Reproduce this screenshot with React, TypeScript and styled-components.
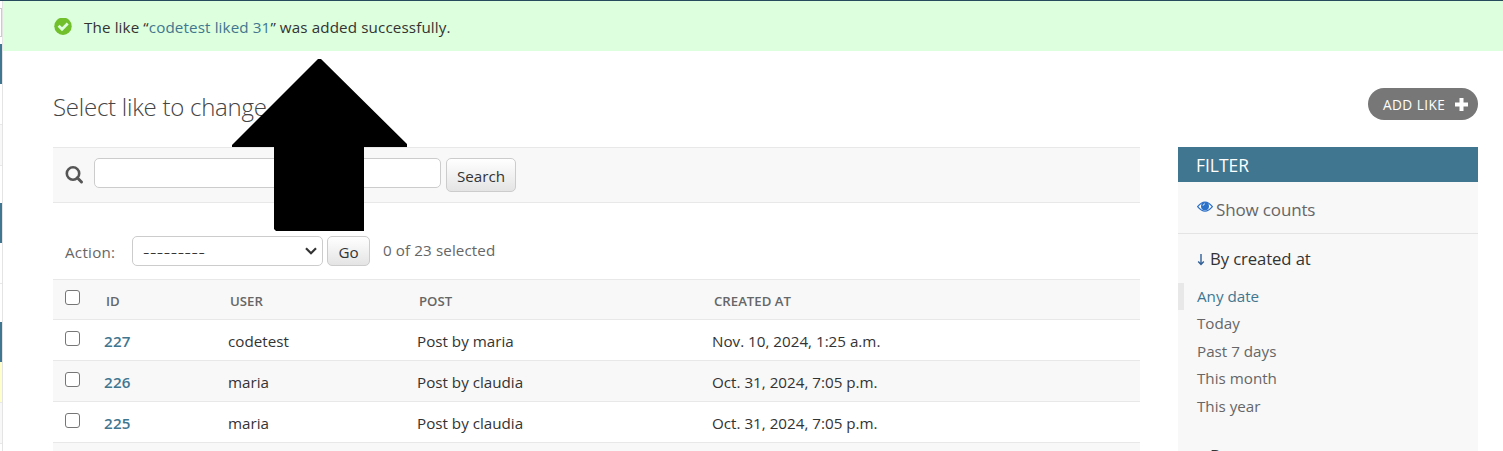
import React from "react";
import styled, { createGlobalStyle } from "styled-components";

const GlobalStyle = createGlobalStyle`
  * { box-sizing: border-box; }
  html, body { margin: 0; padding: 0; overflow: hidden; background: #fff; }
  body { font-family: "Open Sans", "Noto Sans", sans-serif; font-size: 15.2px; color: #333; }
  h1, h2, h3, ul, p { margin: 0; padding: 0; font-weight: 400; }
  a { color: #417690; text-decoration: none; }
`;

const Page = styled.div`
  position: relative;
  display: flex;
  height: 451px;
  overflow: hidden;
  border-top: 1px solid #264b5d;
`;
const NavEdge = styled.nav`
  width: 3px;
  flex: none;
  border-right: 1px solid #e4e4e4;
`;
const NavBlock = styled.div<{ $h: number; $bg?: string; $line?: boolean }>`
  height: ${(p) => p.$h}px;
  background: ${(p) => p.$bg || "#fff"};
  border-top: ${(p) => (p.$line ? "1px solid #e8e8e8" : "0")};
`;
const NavInput = styled.div`
  height: 29px;
  border: 1px solid #ccc;
  border-left: 0;
`;
const Main = styled.main`
  flex: 1;
  min-width: 0;
`;
const Message = styled.div`
  display: flex;
  align-items: center;
  height: 50px;
  padding: 2px 0 0 51px;
  background: #dfd;
`;
const MessageText = styled.p`
  margin-left: 12px;
  line-height: 20px;
  letter-spacing: 0.12px;
  white-space: nowrap;
`;
const Content = styled.div`
  padding: 36px 25px 0 50px;
`;
const TitleRow = styled.div`
  display: flex;
  justify-content: space-between;
  height: 60px;
`;
const Title = styled.h1`
  margin-top: 4px;
  font-size: 24px;
  font-weight: 300;
  line-height: 32px;
  letter-spacing: -0.25px;
  color: #444;
`;
const AddButton = styled.a`
  display: flex;
  align-items: center;
  justify-content: space-between;
  width: 110px;
  height: 32px;
  margin-top: 1px;
  padding: 0 10px 0 15px;
  border-radius: 16px;
  background: #777;
  color: #fff;
  font-size: 13.6px;
  letter-spacing: 0.45px;
  white-space: nowrap;
`;
const AddLabel = styled.span`
  padding-top: 1px;
`;
const Columns = styled.div`
  display: flex;
  justify-content: space-between;
  align-items: flex-start;
`;
const List = styled.section`
  width: 1087px;
`;
const SearchBar = styled.div`
  display: flex;
  height: 56px;
  padding: 10px 12px;
  background: #f8f8f8;
  border-top: 1px solid #e8e8e8;
  border-bottom: 1px solid #e8e8e8;
`;
const SearchIcon = styled.svg`
  margin: 8px 10px 0 0;
`;
const SearchInput = styled.input`
  width: 347px;
  height: 30px;
  margin-right: 5px;
  border: 1px solid #ccc;
  border-radius: 5px;
  background: #fff;
`;
const Button = styled.button<{ $w: number; $h: number }>`
  width: ${(p) => p.$w}px;
  height: ${(p) => p.$h}px;
  padding: 2px 0 0;
  border: 1px solid #ccc;
  border-radius: 5px;
  background: linear-gradient(#fff, #e4e4e4);
  color: #333;
  font: 15.2px "Open Sans", sans-serif;
`;
const Actions = styled.div`
  display: flex;
  height: 76px;
  padding: 33px 12px 0;
  color: #666;
`;
const ActionLabel = styled.label`
  width: 67px;
  padding-top: 6px;
  line-height: 20px;
  letter-spacing: 0.25px;
`;
const Select = styled.div`
  display: flex;
  align-items: center;
  justify-content: space-between;
  width: 191px;
  height: 30px;
  margin-right: 4px;
  padding: 0 5px 0 10px;
  border: 1px solid #ccc;
  border-radius: 5px;
  color: #333;
`;
const Dashes = styled.span`
  padding-top: 2px;
  font-size: 20px;
  font-weight: 300;
  line-height: 26px;
  letter-spacing: 0.5px;
`;
const Counter = styled.span`
  margin-left: 13px;
  padding-top: 4px;
  line-height: 20px;
  letter-spacing: 0.1px;
`;
const Row = styled.div<{ $head?: boolean; $alt?: boolean }>`
  display: grid;
  grid-template-columns: 51px 124px 189px 295px 1fr;
  height: 41px;
  line-height: 20px;
  padding-top: ${(p) => (p.$head ? 10 : 11)}px;
  background: ${(p) => (p.$head || p.$alt ? "#f8f8f8" : "#fff")};
  border-top: ${(p) => (p.$head ? "1px solid #e8e8e8" : "0")};
  border-bottom: 1px solid #e8e8e8;
`;
const HeadCell = styled.span`
  padding: 1px 0 0 2px;
  color: #666;
  font-size: 13.2px;
  font-weight: 600;
`;
const Cell = styled.span``;
const IdLink = styled.a`
  font-weight: 600;
  letter-spacing: 0.2px;
`;
const Check = styled.input`
  appearance: none;
  width: 15px;
  height: 15px;
  margin: 0 0 0 12px;
  border: 1px solid #767676;
  border-radius: 3px;
  background: #fff;
`;
const Filter = styled.aside`
  width: 300px;
  height: 320px;
  background: #f8f8f8;
`;
const FilterTitle = styled.h2`
  height: 35px;
  padding: 1px 0 0 18px;
  background: #417690;
  color: #fff;
  font-size: 17.4px;
  line-height: 34px;
`;
const Counts = styled.div`
  display: flex;
  height: 52px;
  padding: 16px 0 0 19px;
  border-bottom: 1px solid #e4e4e4;
  color: #666;
  font-size: 17px;
  line-height: 24px;
  letter-spacing: -0.15px;
`;
const CountsLabel = styled.span`
  margin-left: 3px;
`;
const FilterHeading = styled.h3`
  display: flex;
  padding-left: 19px;
  font-size: 16.7px;
  line-height: 24px;
  letter-spacing: -0.1px;
  color: #333;
`;
const DownArrow = styled.svg`
  margin: 6px 5px 0 0;
`;
const Group = styled.div`
  padding-top: 13px;
`;
const Options = styled.ul`
  list-style: none;
  padding: 11.5px 0 24px;
`;
const Option = styled.li<{ $on?: boolean }>`
  height: 27.5px;
  line-height: 27px;
  padding-left: ${(p) => (p.$on ? 13 : 19)}px;
  border-left: ${(p) => (p.$on ? "6px solid #e8e8e8" : "0")};
  color: ${(p) => (p.$on ? "#417690" : "#666")};
`;
const Pointer = styled.svg`
  position: absolute;
  left: 232px;
  top: 58px;
`;

const rows = [
  ["227", "codetest", "Post by maria", "Nov. 10, 2024, 1:25 a.m."],
  ["226", "maria", "Post by claudia", "Oct. 31, 2024, 7:05 p.m."],
  ["225", "maria", "Post by claudia", "Oct. 31, 2024, 7:05 p.m."],
];
const dates = ["Any date", "Today", "Past 7 days", "This month", "This year"];

const Down = () => (
  <DownArrow width="8" height="14" viewBox="0 0 8 14">
    <path d="M4 1V11.500M1.200 8.500 4 11.500l2.800-3" fill="none" stroke="#315f96" strokeWidth="1.4" />
  </DownArrow>
);

export default function App() {
  return (
    <>
      <GlobalStyle />
      <Page>
        <NavEdge>
          <NavBlock $h={7} />
          <NavInput />
          <NavBlock $h={7} />
          <NavBlock $h={40} $bg="#417690" />
          <NavBlock $h={40} />
          <NavBlock $h={41} $bg="#f8f8f8" $line />
          <NavBlock $h={38} $line />
          <NavBlock $h={40} $bg="#417690" />
          <NavBlock $h={40} />
          <NavBlock $h={39} $line />
          <NavBlock $h={40} $bg="#417690" />
          <NavBlock $h={40} $bg="#ffffcc" />
          <NavBlock $h={41} $bg="#f8f8f8" $line />
          <NavBlock $h={10} $line />
        </NavEdge>
        <Main>
          <Message>
            <svg width="18" height="18" viewBox="0 0 18 18">
              <circle cx="9" cy="8.200" r="8.700" fill="#70bf2b" />
              <path d="m4.600 7.800 3.400 3.400 5.700-5.700" fill="none" stroke="#dfd" strokeWidth="2.800" />
            </svg>
            <MessageText>
              The like “<a>codetest liked 31</a>” was added successfully.
            </MessageText>
          </Message>
          <Content>
            <TitleRow>
              <Title>Select like to change</Title>
              <AddButton>
                <AddLabel>ADD LIKE</AddLabel>
                <svg width="13" height="13" viewBox="0 0 13 13">
                  <path d="M6.500 0v13M0 6.500h13" stroke="#fff" strokeWidth="4" />
                </svg>
              </AddButton>
            </TitleRow>
            <Columns>
              <List>
                <SearchBar>
                  <SearchIcon width="19" height="19" viewBox="0 0 19 19">
                    <circle cx="8" cy="7.500" r="6.200" fill="none" stroke="#555" strokeWidth="2.600" />
                    <path d="m12.300 11.800 4.200 4.200" stroke="#555" strokeWidth="3" strokeLinecap="round" />
                  </SearchIcon>
                  <SearchInput />
                  <Button $w={70} $h={34}>Search</Button>
                </SearchBar>
                <Actions>
                  <ActionLabel>Action:</ActionLabel>
                  <Select>
                    <Dashes>---------</Dashes>
                    <svg width="12" height="8" viewBox="0 0 12 8">
                      <path d="m1 1.200 5 5 5-5" fill="none" stroke="#333" strokeWidth="2.200" />
                    </svg>
                  </Select>
                  <Button $w={43} $h={30}>Go</Button>
                  <Counter>0 of 23 selected</Counter>
                </Actions>
                <Row $head>
                  <Check type="checkbox" />
                  <HeadCell>ID</HeadCell>
                  <HeadCell>USER</HeadCell>
                  <HeadCell>POST</HeadCell>
                  <HeadCell>CREATED AT</HeadCell>
                </Row>
                {rows.map(([id, user, post, created], i) => (
                  <Row key={id} $alt={i % 2 === 1}>
                    <Check type="checkbox" />
                    <IdLink>{id}</IdLink>
                    <Cell>{user}</Cell>
                    <Cell>{post}</Cell>
                    <Cell>{created}</Cell>
                  </Row>
                ))}
                <Row $alt />
              </List>
              <Filter>
                <FilterTitle>FILTER</FilterTitle>
                <Counts>
                  <svg width="16" height="18" viewBox="0 0 16 18">
                    <path d="M.6 8.600Q8-.5 15.400 8.600 8 17.500 .6 8.600Z" fill="#fff" stroke="#2b70c9" strokeWidth="1.200" />
                    <circle cx="8" cy="8.200" r="4" fill="#2b70c9" />
                    <path d="M6 7.800q.2-1.800 2-2" fill="none" stroke="#fff" strokeWidth=".8" />
                  </svg>
                  <CountsLabel>Show counts</CountsLabel>
                </Counts>
                <Group>
                  <FilterHeading><Down />By created at</FilterHeading>
                  <Options>
                    {dates.map((d, i) => (
                      <Option key={d} $on={i === 0}>{d}</Option>
                    ))}
                  </Options>
                  <FilterHeading><Down />By user</FilterHeading>
                </Group>
              </Filter>
            </Columns>
          </Content>
        </Main>
        <Pointer width="176" height="173" viewBox="0 0 176 173">
          <path d="M86 0h3l86 85v3h-43v84H44l-2-2V88H0v-2Z" fill="#000" />
        </Pointer>
      </Page>
    </>
  );
}
